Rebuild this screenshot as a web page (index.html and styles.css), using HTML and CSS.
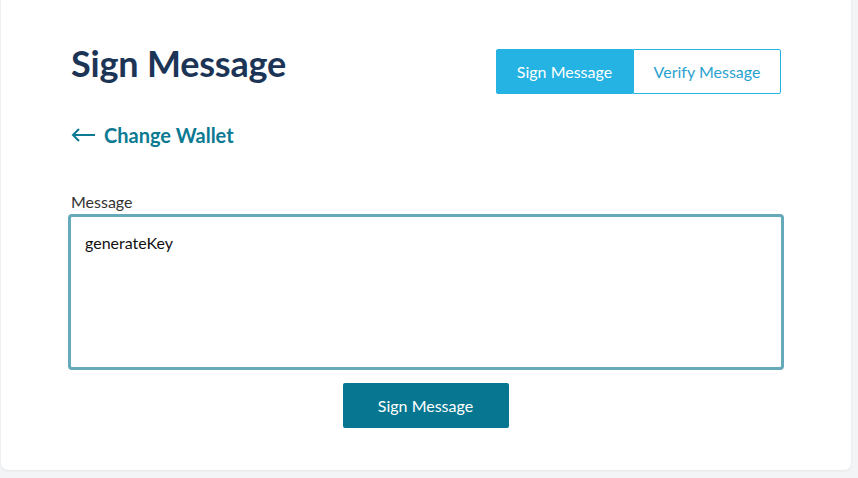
FILE: index.html
```html
<!DOCTYPE html>
<html>
<head>
<meta charset="utf-8">
<link rel="stylesheet" href="styles.css">
</head>
<body>
<div class="card">
  <div class="head">
    <h1 class="title">Sign Message</h1>
    <div class="toggle">
      <span class="seg active">Sign Message</span>
      <span class="seg">Verify Message</span>
    </div>
  </div>
  <a class="back"><svg class="arrow" width="25" height="14" viewBox="0 0 25 14"><path d="M24 7H2M8 1L2 7l6 6" fill="none" stroke="#0b7a92" stroke-width="2"/></svg>Change Wallet</a>
  <label class="label">Message</label>
  <div class="area">generateKey</div>
  <div class="actions"><button class="btn">Sign Message</button></div>
</div>
</body>
</html>
```
FILE: styles.css
```css
html, body { margin: 0; padding: 0; }
body {
  background: #f3f4f6;
  font-family: Lato, "Noto Sans", sans-serif;
  height: 478px;
  overflow: hidden;
}
.card {
  background: #fff;
  margin: -10px 7px 0 1px;
  height: 480px;
  border-radius: 0 0 7px 7px;
  box-shadow: 0 1px 3px rgba(0,0,0,0.06);
  padding: 0 69px 0 70px;
  box-sizing: border-box;
  padding-top: 10px;
}
.head {
  display: flex;
  justify-content: space-between;
  align-items: flex-start;
  padding-right: 1px;
}
.title {
  margin: 41px 0 0;
  font-size: 36px;
  font-weight: 700;
  color: #1c3557;
  line-height: 44px;
  letter-spacing: -0.2px;
}
.toggle {
  display: flex;
  margin-top: 49px;
  height: 45px;
}
.seg {
  display: flex;
  align-items: center;
  justify-content: center;
  font-size: 16px;
  color: #2aa2cf;
  border: 1px solid #27b3e0;
  box-sizing: border-box;
  width: 148px;
  border-radius: 0 2px 2px 0;
}
.seg.active {
  background: #24b3e2;
  color: #fff;
  width: 137px;
  border-radius: 2px 0 0 2px;
}
.back {
  display: flex;
  align-items: center;
  margin-top: 27px;
  font-size: 20px;
  font-weight: 700;
  color: #0b7a92;
  height: 28px;
}
.arrow { margin-right: 8px; margin-top: -1px; }
.label {
  display: block;
  margin-top: 43px;
  font-size: 16px;
  color: #333;
  line-height: 20px;
}
.area {
  margin: 2px -2px 0 -3px;
  height: 156px;
  box-sizing: border-box;
  border: 3px solid #66a9bb;
  border-radius: 4px;
  padding: 16px 14px 14px;
  font-size: 16px;
  color: #111;
  line-height: 20px;
}
.actions {
  display: flex;
  justify-content: center;
  margin-top: 13px;
  padding-right: 2px;
}
.btn {
  width: 166px;
  height: 45px;
  background: #077791;
  color: #fff;
  border: 0;
  border-radius: 2px;
  font-family: Lato, sans-serif;
  font-size: 16px;
}
```
